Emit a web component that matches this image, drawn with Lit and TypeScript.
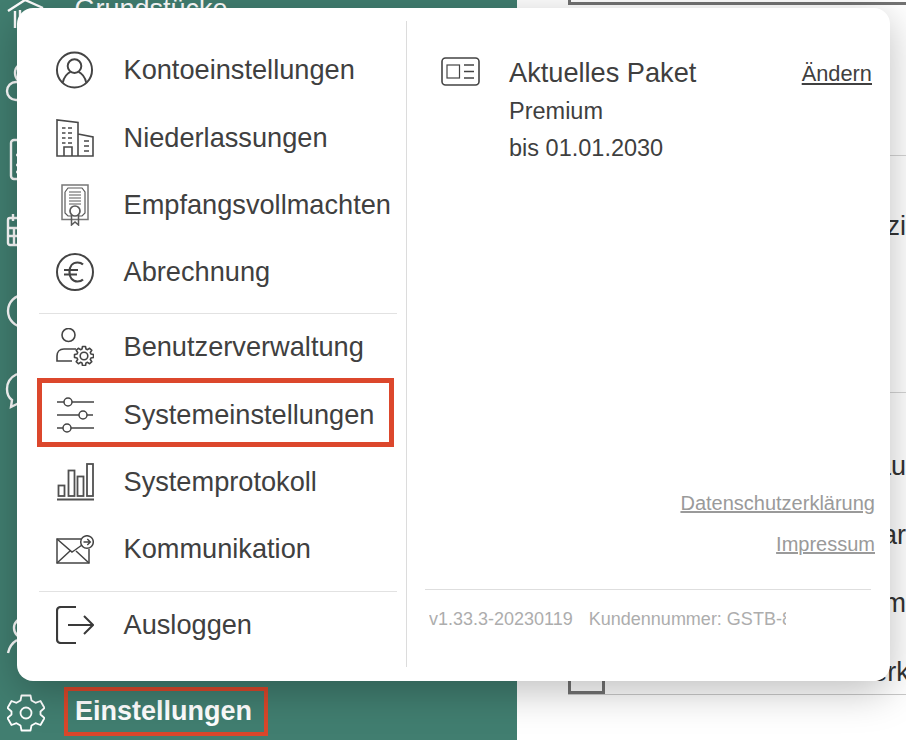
import { LitElement, html, css, svg } from "lit";
import { customElement } from "lit/decorators.js";

const ic = (w: number, h: number, body: unknown) =>
  html`<svg class="ic" width=${w} height=${h} viewBox="0 0 ${w} ${h}">${body}</svg>`;

const gearPath = (cx: number, cy: number, ro: number, ri: number, n: number) => {
  const pts: string[] = [];
  const step = (Math.PI * 2) / n;
  for (let i = 0; i < n; i++) {
    const a = i * step - Math.PI / 2;
    const list: [number, number][] = [
      [ri, a - step * 0.36],
      [ro, a - step * 0.2],
      [ro, a + step * 0.2],
      [ri, a + step * 0.36],
    ];
    for (const [r, t] of list) {
      pts.push(`${(cx + r * Math.cos(t)).toFixed(2)} ${(cy + r * Math.sin(t)).toFixed(2)}`);
    }
  }
  return "M" + pts.join("L") + "Z";
};

const icons = {
  user: ic(40, 42, svg`<g fill="none" stroke="#444" stroke-width="2"><circle cx="20" cy="21" r="18"/><circle cx="20" cy="17" r="7"/><path d="M8 34c1-6 5-10 8-11M32 34c-1-6-5-10-8-11"/></g>`),
  building: ic(38, 38, svg`<g fill="none" stroke="#4a4a4a" stroke-width="1.600"><path d="M1 37V1l21 2.500V37zM22 15l15 3v19H22M1 37h36"/><path d="M8 37v-9h8v9"/><path d="M6 9h3.500M12 9h4M6 14h3.500M12 14h4M6 19h3.500M12 19h4M6 24h3.500M12 24h4M28 22h5M28 27h5M28 32h5" stroke-width="1.500"/></g>`),
  cert: ic(28, 42, svg`<g fill="none" stroke="#5a5a5a" stroke-width="1.200"><rect x="1" y="1" width="26" height="34.500" stroke="#777" stroke-width="1.500"/><path d="M4 8l3-4h14l3 4v21l-3 3h-3M4 8v21l3 3h3"/><path d="M8 8h12M8 11h12M8 14h12M8 17h12M8 20h12"/><circle cx="14" cy="27" r="5" stroke-width="1.700"/><path d="M10.500 31v10l3.500-3 3.500 3V31" stroke-width="1.500"/></g>`),
  euro: ic(38, 38, svg`<g fill="none" stroke="#444" stroke-width="2"><circle cx="19" cy="19" r="18"/><path d="M27 11.500C25.500 10 23.500 9.500 21.500 9.500c-5 0-8 4-8 9.500s3 9.500 8 9.500c2 0 4-.5 5.500-2M8 17h14M8 21.500h13" stroke-width="2.200"/></g>`),
  userGear: ic(38, 38, svg`<g fill="none" stroke="#444" stroke-width="1.600"><circle cx="12.500" cy="7" r="6.500"/><path d="M20 21H8c-4.500 0-7 3-7 7v5h15"/><circle cx="28" cy="28" r="3.800"/><path d=${gearPath(28, 28, 9.6, 7.2, 8)} stroke-linejoin="round"/></g>`),
  sliders: ic(38, 36, svg`<g fill="none" stroke="#444" stroke-width="1.500"><circle cx="12" cy="5" r="4"/><circle cx="27" cy="18" r="4"/><circle cx="11" cy="31" r="4"/><path d="M1 5h7M16 5h22M1 18h22M31 18h6M1 31h6M15 31h23"/></g>`),
  bars: ic(38, 38, svg`<g fill="none" stroke="#505050" stroke-width="1.800"><rect x="2.500" y="22.500" width="6" height="10.500"/><rect x="12.500" y="7.500" width="6" height="25.500"/><rect x="21.500" y="13.500" width="6" height="19.500"/><rect x="31" y="1" width="6" height="32"/><path d="M1 36.500h37" stroke-width="2"/></g>`),
  mail: ic(38, 29, svg`<g fill="none" stroke="#444" stroke-width="1.500"><path d="M25 4H1v24h32V14"/><path d="M1 4l15 13 3-2M1 28l13-12M33 28L20 16M19 15l7-5"/><circle cx="31" cy="7" r="6.300"/><path d="M27.500 7h6.500M31.300 4l3 3-3 3" stroke-width="1.400"/></g>`),
  logout: ic(38, 38, svg`<g fill="none" stroke="#3a3a3a"><path d="M20 1H5C2.500 1 1 2.500 1 5v28c0 2.500 1.500 4 4 4h15" stroke-width="2.200"/><path d="M12 19h25M28 10l9 9-9 9" stroke-width="2"/></g>`),
  card: ic(39, 29, svg`<g fill="none" stroke="#444"><rect x="1" y="1" width="37" height="27" rx="3.500" stroke-width="1.600"/><rect x="6" y="8" width="12.500" height="13" stroke-width="1.200"/><path d="M23 8h10M23 14.500h10M23 21h10" stroke-width="1.300"/></g>`),
  gear: ic(38, 40, svg`<g fill="none" stroke="#fff" stroke-width="1.800"><circle cx="19" cy="20" r="5.500"/><path d="M14.500 2.500h9l1 5 4 2.300 5-1.800 4 7-4 3.500v3l4 3.500-4 7-5-1.800-4 2.300-1 5h-9l-1-5-4-2.300-5 1.800-4-7 4-3.500v-3l-4-3.500 4-7 5 1.800 4-2.300z" stroke-linejoin="round"/></g>`),
};

const groups = [
  [
    ["Kontoeinstellungen", icons.user],
    ["Niederlassungen", icons.building],
    ["Empfangsvollmachten", icons.cert],
    ["Abrechnung", icons.euro],
  ],
  [
    ["Benutzerverwaltung", icons.userGear],
    ["Systemeinstellungen", icons.sliders],
    ["Systemprotokoll", icons.bars],
    ["Kommunikation", icons.mail],
  ],
  [["Ausloggen", icons.logout]],
] as const;

const sideItems = [
  { h: 68, label: "Grundstücke", icon: svg`<path d="M4 17L21 6l18 8M11 17v17M16 16v18h10"/>` },
  { h: 76, label: "", icon: svg`<circle cx="21" cy="11" r="10"/><path d="M30 20H12a9 9 0 0 0 0 18h18"/>` },
  { h: 72, label: "", icon: svg`<rect x="7" y="2" width="30" height="39" rx="3"/><path d="M12 17h2M12 27h2M12 34h2"/>` },
  { h: 78, label: "", icon: svg`<rect x="4" y="8" width="30" height="27" rx="2"/><path d="M9 4v7M4 18h30M4 26h30M10 18v17"/>` },
  { h: 80, label: "", icon: svg`<circle cx="20" cy="23" r="16"/>` },
  { h: 248, label: "", icon: svg`<path d="M13 6C7 9 3 13 3 21c0 5 2 9 5 11l-1 7 8-4"/>` },
  { h: 70, label: "", icon: svg`<circle cx="20" cy="12" r="10"/><path d="M13 24C8 27 5 32 4 37"/>` },
];

@customElement("app-root")
export class AppRoot extends LitElement {
  static styles = css`
    :host {
      display: block;
      position: relative;
      width: 906px;
      height: 740px;
      overflow: hidden;
      background: #fff;
      font-family: "Liberation Sans", Arial, sans-serif;
      color: #3f3f3f;
    }
    .page { display: flex; height: 740px; }
    .side {
      width: 517px;
      flex: none;
      background: #417e70;
      color: #fff;
      display: flex;
      flex-direction: column;
      box-sizing: border-box;
      padding-top: 0;
      height: 740px;
      overflow: hidden;
      position: relative;
    }
    .rows { display: flex; flex-direction: column; margin-top: -6px; }
    .side-item { display: flex; gap: 26.500px; padding-left: 4px; flex: none; }
    .side-item svg { flex: none; fill: none; stroke: #fff; stroke-width: 2.4; }
    .side-item span { font-size: 27px; line-height: 30px; margin-top: 0; }
    .side-last {
      position: absolute;
      left: 0; right: 0; top: 686px;
      height: 54px;
      display: flex;
      align-items: center;
      padding-left: 7px;
      gap: 19px;
    }
    .side-last b {
      font-size: 27px;
      font-weight: bold;
      padding: 6px 12px 6px 7px;
      line-height: 29px;
      border: 4px solid #d9472b;
      color: #fff;
      margin-top: -4px;
    }
    .main {
      flex: 1;
      padding-left: 51px;
      min-width: 0;
      display: flex;
      flex-direction: column;
      font-size: 27px;
      color: #333;
      white-space: nowrap;
    }
    .main-top {
      height: 5px;
      box-sizing: border-box;
      border-left: 3px solid #737373;
      border-bottom: 3px solid #737373;
      flex: none;
      margin-bottom: 150px;
    }
    .sec {
      flex: none;
      box-sizing: border-box;
      border-top: 1px solid #d4d4d4;
      text-align: right;
    }
    .sec-a { height: 237px; padding-top: 54px; line-height: 32px; }
    .sec-b { height: 302px; padding-top: 39px; line-height: 68.500px; }
    .check-row {
      display: flex;
      align-items: flex-end;
      margin-top: 12.500px;
      height: 44px;
      line-height: 44px;
      text-align: left;
    }
    .check {
      width: 37px;
      height: 40px;
      flex: none;
      box-sizing: border-box;
      border: 3px solid #737373;
      margin-right: 39px;
    }
    .check-row span { flex: none; }
    .sec-end { height: 1px; background: #c9c9c9; flex: none; }
    .overlay {
      position: absolute;
      left: 17px;
      top: 8px;
      width: 873px;
      height: 673px;
      background: #fff;
      border-radius: 16px;
      box-shadow: 0 10px 40px rgba(0,0,0,.26);
      display: grid;
      grid-template-columns: 389px 1fr;
      box-sizing: border-box;
      padding: 13px 18px 14px 0;
    }
    .menu { padding: 15.800px 9px 0 22px; display: flex; flex-direction: column; }
    .group { display: flex; flex-direction: column; padding-bottom: 8px; }
    .group:first-child { padding-bottom: 6.600px; }
    .group + .group { border-top: 1px solid #e2e2e2; }
    .item {
      display: flex;
      align-items: center;
      font-size: 27.200px;
      color: #404040;
      height: 67.300px;
      white-space: nowrap;
      position: relative;
    }
    .ico { width: 39px; display: flex; justify-content: center; margin: 0 29.500px 0 16px; flex: none; }
    .ico svg { display: block; }
    .item.hl::after {
      content: "";
      position: absolute;
      left: -2px;
      right: 3px;
      top: -3px;
      height: 69px;
      box-sizing: border-box;
      border: 5px solid #dc472c;
    }
    .info {
      border-left: 1px solid #dcdcdc;
      padding: 31px 0 0 18px;
      display: flex;
      flex-direction: column;
      min-width: 0;
    }
    .pack { display: flex; align-items: flex-start; }
    .pack .ic { margin: 5px 29px 0 16px; flex: none; }
    .pack-text { flex: 1; font-size: 23.500px; line-height: 37px; }
    .pack-text .t { font-size: 27.200px; line-height: 41px; margin-top: -0.500px; }
    .pack a { font-size: 21.800px; color: #404040; text-decoration: underline; margin-top: 8.500px; }
    .links { margin-top: auto; display: flex; flex-direction: column; align-items: flex-end; gap: 18px; font-size: 20px; line-height: 23px; color: #9a9a9a; padding-bottom: 33.500px; margin-right: -3px; }
    .links a { text-decoration: underline; }
    .foot { border-top: 1px solid #dedede; font-size: 18px; color: #adadad; padding: 19px 0 0 4px; height: 78px; box-sizing: border-box; margin-right: 1px; }
    .foot div { width: 357px; overflow: hidden; white-space: nowrap; }
    .foot span + span { margin-left: 16px; }
  `;

  render() {
    return html`
      <div class="page">
        <div class="side">
          <div class="rows">
            ${sideItems.map(
              (s) => html`<div class="side-item" style="height:${s.h}px">
                <svg width="44" height="44" viewBox="0 0 44 44">${s.icon}</svg>
                ${s.label ? html`<span>${s.label}</span>` : ""}
              </div>`
            )}
          </div>
          <div class="side-last">${icons.gear}<b>Einstellungen</b></div>
        </div>
        <div class="main">
          <div class="main-top"></div>
          <div class="sec sec-a">zi</div>
          <div class="sec sec-b">
            au<br />ar<br />m
            <div class="check-row"><div class="check"></div><span>Schreiben Steuerwerk</span></div>
          </div>
          <div class="sec-end"></div>
        </div>
      </div>
      <div class="overlay">
        <div class="menu">
          ${groups.map(
            (g) => html`<div class="group">
              ${g.map(
                ([label, icon]) => html`<div class="item ${label === "Systemeinstellungen" ? "hl" : ""}">
                  <div class="ico">${icon}</div>${label}
                </div>`
              )}
            </div>`
          )}
        </div>
        <div class="info">
          <div class="pack">
            ${icons.card}
            <div class="pack-text">
              <div class="t">Aktuelles Paket</div>
              <div>Premium</div>
              <div>bis 01.01.2030</div>
            </div>
            <a>Ändern</a>
          </div>
          <div class="links"><a>Datenschutzerklärung</a><a>Impressum</a></div>
          <div class="foot"><div><span>v1.33.3-20230119</span><span>Kundennummer: GSTB-8123</span></div></div>
        </div>
      </div>
    `;
  }
}
